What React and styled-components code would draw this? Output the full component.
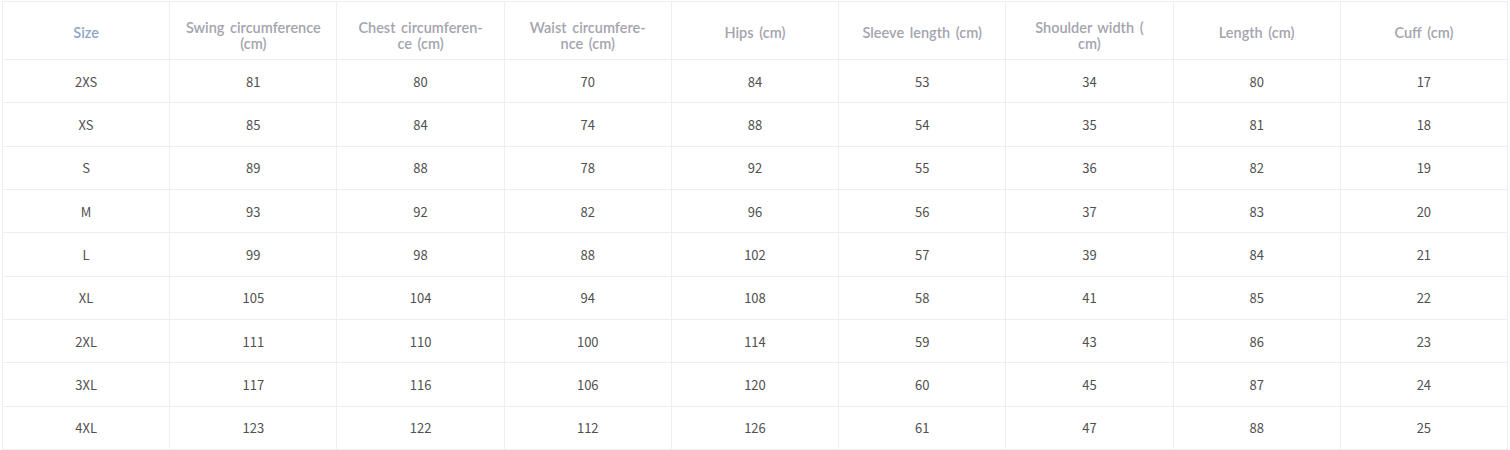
import React from 'react';
import styled, { createGlobalStyle } from 'styled-components';

const GlobalStyle = createGlobalStyle`
  body {
    margin: 0;
    background: #fff;
  }
`;

const Wrapper = styled.div`
  padding: 1px 2px 0 2px;
`;

const Table = styled.table`
  width: 1506px;
  border-collapse: collapse;
  table-layout: fixed;
  border: 1px solid #ebeef5;
`;

const HeadCell = styled.th`
  height: 58px;
  box-sizing: border-box;
  padding: ${(p) => (p.$multi ? '10px' : '4px')} 8px 0;
  border: 1px solid #ebeef5;
  font-family: Lato, "Noto Sans", sans-serif;
  font-size: 14.5px;
  font-weight: 600;
  line-height: 16px;
  word-spacing: 2px;
  text-align: center;
  white-space: nowrap;
  color: ${(p) => (p.$accent ? '#8ca5c9' : '#a4a4ae')};
`;

const Line = styled.span`
  display: block;
`;

const Row = styled.tr`
  height: 43.33px;
`;

const Cell = styled.td`
  padding: 0 10px;
  border: 1px solid #ebeef5;
  font-family: "Noto Sans CJK SC", "Noto Sans", sans-serif;
  font-size: 13px;
  text-align: center;
  color: #505050;
`;

// header labels, already split the way the source wraps them
const columns = [
  ['Size'],
  ['Swing circumference', '(cm)'],
  ['Chest circumferen-', 'ce (cm)'],
  ['Waist circumfere-', 'nce (cm)'],
  ['Hips (cm)'],
  ['Sleeve length (cm)'],
  ['Shoulder width (', 'cm)'],
  ['Length (cm)'],
  ['Cuff (cm)'],
];

const rows = [
  ['2XS', 81, 80, 70, 84, 53, 34, 80, 17],
  ['XS', 85, 84, 74, 88, 54, 35, 81, 18],
  ['S', 89, 88, 78, 92, 55, 36, 82, 19],
  ['M', 93, 92, 82, 96, 56, 37, 83, 20],
  ['L', 99, 98, 88, 102, 57, 39, 84, 21],
  ['XL', 105, 104, 94, 108, 58, 41, 85, 22],
  ['2XL', 111, 110, 100, 114, 59, 43, 86, 23],
  ['3XL', 117, 116, 106, 120, 60, 45, 87, 24],
  ['4XL', 123, 122, 112, 126, 61, 47, 88, 25],
];

export default function App() {
  return (
    <Wrapper>
      <GlobalStyle />
      <Table>
        <thead>
          <tr>
            {columns.map((lines, i) => (
              <HeadCell key={lines[0]} $accent={i === 0} $multi={lines.length > 1}>
                {lines.map((l) => (
                  <Line key={l}>{l}</Line>
                ))}
              </HeadCell>
            ))}
          </tr>
        </thead>
        <tbody>
          {rows.map((r) => (
            <Row key={r[0]}>
              {r.map((v, i) => (
                <Cell key={i}>{v}</Cell>
              ))}
            </Row>
          ))}
        </tbody>
      </Table>
    </Wrapper>
  );
}
